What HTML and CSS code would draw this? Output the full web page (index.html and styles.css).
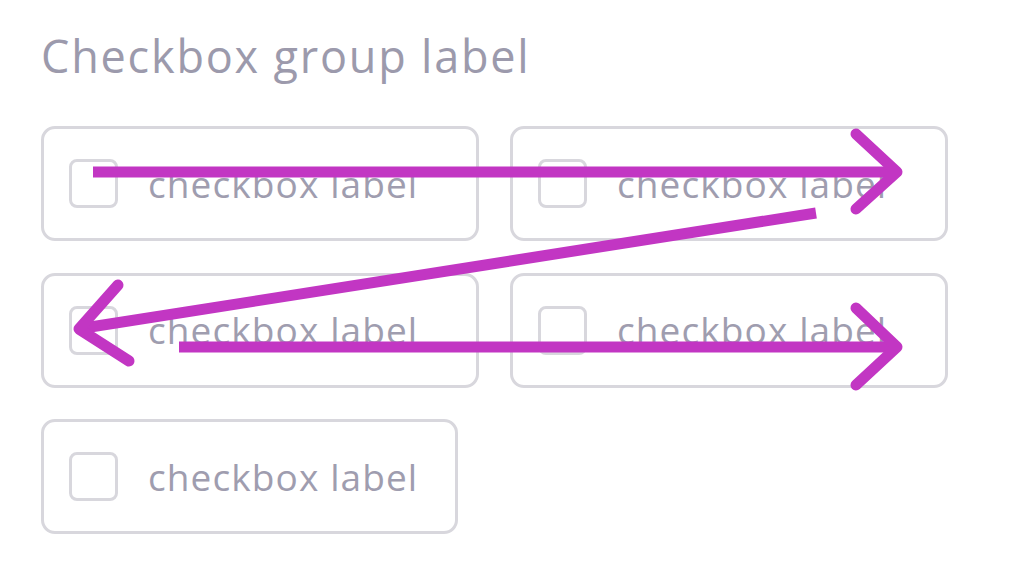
FILE: index.html
```html
<!DOCTYPE html>
<html lang="en">
<head>
<meta charset="utf-8">
<title>Checkbox group</title>
<link rel="stylesheet" href="styles.css">
</head>
<body>
<main class="page">
  <fieldset class="group">
    <legend class="group-label">Checkbox group label</legend>
    <div class="options">
      <label class="option"><span class="box"></span><span class="text">checkbox label</span></label>
      <label class="option"><span class="box"></span><span class="text">checkbox label</span></label>
      <label class="option"><span class="box"></span><span class="text">checkbox label</span></label>
      <label class="option"><span class="box"></span><span class="text">checkbox label</span></label>
      <label class="option option-auto"><span class="box"></span><span class="text">checkbox label</span></label>
    </div>
  </fieldset>
  <svg class="flow" width="1024" height="577" viewBox="0 0 1024 577" aria-hidden="true">
    <g fill="none" stroke="#c236c3" stroke-width="11" stroke-linejoin="round">
      <line x1="93" y1="172" x2="895" y2="172" stroke-linecap="butt"/>
      <polyline points="856,134 897,172 856,209" stroke-linecap="round"/>
      <line x1="816" y1="213" x2="84" y2="328" stroke-linecap="butt"/>
      <polyline points="118,285 79,329 129,361" stroke-linecap="round"/>
      <line x1="179" y1="347" x2="895" y2="347" stroke-linecap="butt"/>
      <polyline points="856,308 897,347 856,385" stroke-linecap="round"/>
    </g>
  </svg>
</main>
</body>
</html>
```
FILE: styles.css
```css
html, body {
  margin: 0;
  padding: 0;
  background: #ffffff;
}

.page {
  position: relative;
  width: 1024px;
  height: 577px;
  overflow: hidden;
  font-family: "Open Sans", Lato, sans-serif;
}

.group {
  margin: 0;
  padding: 34px 0 0 41px;
  border: 0;
  min-width: 0;
}

.group-label {
  float: left;
  width: 100%;
  padding: 0;
  margin: 0 0 48px;
  font-size: 45px;
  line-height: 44px;
  letter-spacing: 1.8px;
  font-weight: 400;
  color: #9c9aac;
}

.options {
  clear: both;
  display: grid;
  grid-template-columns: 438px 438px;
  column-gap: 31px;
  row-gap: 31.5px;
}

.option {
  box-sizing: border-box;
  height: 115px;
  display: flex;
  align-items: center;
  gap: 30px;
  padding: 0 37px 0 25px;
  border: 3px solid #d8d7dd;
  border-radius: 14px;
  background: #ffffff;
}

.option-auto {
  justify-self: start;
}

.box {
  flex: none;
  box-sizing: border-box;
  width: 49px;
  height: 49px;
  border: 3px solid #d8d7dd;
  border-radius: 8px;
}

.text {
  font-size: 37px;
  line-height: 40px;
  letter-spacing: 1.1px;
  color: #9f9daf;
  white-space: nowrap;
}

.flow {
  position: absolute;
  left: 0;
  top: 0;
  pointer-events: none;
}
```
